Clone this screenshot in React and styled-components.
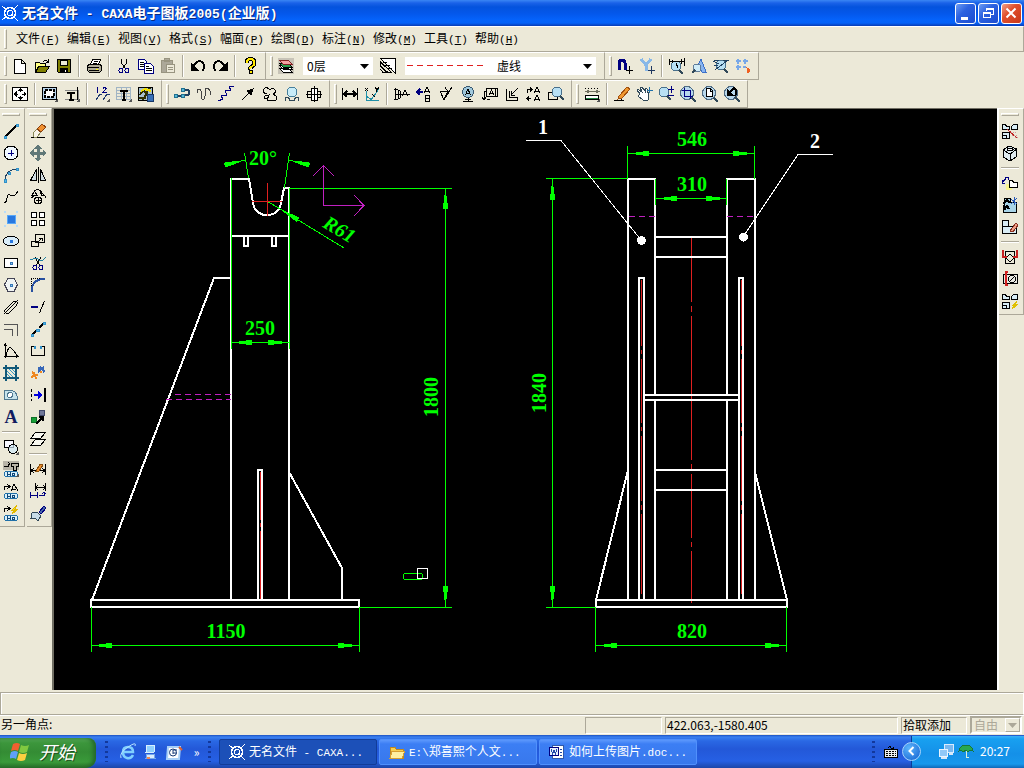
import React from 'react';
import styled, { createGlobalStyle } from 'styled-components';

const face = '#ece9d8';
const shadow = '#aca899';
const navy = '#000080';
const green = '#00ff00';
const magenta = '#c020c0';
const red = '#e02020';
const uiFont = '"Noto Sans CJK SC", sans-serif';
const monoFont = '"Liberation Mono", "Noto Sans CJK SC", monospace';

const GlobalStyle = createGlobalStyle`
  * {
    box-sizing: border-box;
  }
  body {
    margin: 0;
    background: ${face};
    font: 12px/16px ${uiFont};
    color: #000;
  }
  button, select {
    font: inherit;
    color: inherit;
  }
`

const Shell = styled.div`
  display: flex;
  flex-direction: column;
  min-width: 800px;
  height: 100vh;
  min-height: 640px;
`

/* title bar */

const TitleBar = styled.header`
  display: flex;
  align-items: center;
  flex: none;
  height: 26px;
  padding: 0 2px 0 1px;
  background: linear-gradient(#3a86f4 0, #1a62e8 3px, #0453dd 7px, #0458ec 14px, #0563fb 20px, #0562f8 23px, #0a3cb4 26px);
`

const Title = styled.h1`
  flex: 1;
  margin: 0 0 0 3px;
  color: #fff;
  font-size: 14px;
  line-height: 24px;
  font-weight: 700;
  text-shadow: 1px 1px #0a2a80;
  white-space: pre;
`

const Latin = styled.span`
  font-family: ${monoFont};
  font-size: 13px;
`

const WindowButtons = styled.div`
  display: flex;
  gap: 2px;
`

const WindowButton = styled.button`
  display: flex;
  width: 21px;
  height: 21px;
  padding: 0;
  border: 1px solid #fff;
  border-radius: 3px;
  background: ${props => props.$close
    ? 'linear-gradient(135deg, #f0a088, #e0502c 40%, #c8381a)'
    : 'linear-gradient(135deg, #6c9cf4, #2c62e0 40%, #1c4cd0)'};
`

/* menu and toolbars */

const MenuBar = styled.nav`
  display: flex;
  align-items: center;
  flex: none;
  height: 26px;
  padding-left: 4px;
  border-top: 1px solid #fff;
  border-bottom: 1px solid ${shadow};
  border-right: 1px solid ${shadow};
`

const MenuItem = styled.button`
  width: 51px;
  padding: 0;
  border: 0;
  background: none;
  text-align: left;
  white-space: nowrap;

  &:first-of-type {
    margin-left: 7px;
  }
`

const Accel = styled.span`
  font-family: ${monoFont};
  font-size: 11px;

  u {
    text-underline-offset: 1px;
  }
`

const Grip = styled.i`
  flex: none;
  width: ${props => props.$across ? 'auto' : '3px'};
  height: ${props => props.$across ? '3px' : '20px'};
  margin: ${props => props.$across ? '4px 2px' : '0 2px 0 0'};
  border: 1px solid;
  border-color: #fff ${shadow} ${shadow} #fff;
`

const ToolRow = styled.div`
  display: flex;
  flex: none;
  height: 28px;
`

const Band = styled.div`
  display: flex;
  align-items: center;
  padding: 0 4px;
  border: 1px solid;
  border-color: #fff ${shadow} ${shadow} #fff;
  border-left: 0;
`

const ToolButton = styled.button`
  display: flex;
  align-items: center;
  justify-content: center;
  flex: none;
  width: 22px;
  height: 22px;
  padding: 0;
  border: 0;
  background: none;
`

const Divider = styled.i`
  flex: none;
  width: ${props => props.$across ? 'auto' : '2px'};
  height: ${props => props.$across ? '2px' : '22px'};
  margin: ${props => props.$across ? '3px 2px' : '0 3px'};
  border: solid ${shadow};
  border-width: ${props => props.$across ? '1px 0 0' : '0 0 0 1px'};
  box-shadow: ${props => props.$across ? 'inset 0 1px #fff' : 'inset 1px 0 #fff'};
`

const Combo = styled.span`
  display: flex;
  align-items: center;
  width: ${props => props.$wide ? '191px' : '70px'};
  height: 18px;
  margin: 0 4px 0 6px;
  padding: 0 4px 0 2px;
  background: #fff;
`

const ComboSelect = styled.select`
  flex: 1;
  min-width: 0;
  height: 18px;
  padding: 0 2px;
  border: 0;
  background: none;
  appearance: none;
`

const LineSample = styled.svg`
  width: 88px;
  height: 2px;
`

const ComboArrow = styled.svg`
  width: 9px;
  height: 5px;
  pointer-events: none;
`

const IconSvg = styled.svg`
  display: block;
  flex: none;
  width: 18px;
  height: 18px;
  fill: none;
  stroke: #000;
`

/* work area */

const Work = styled.main`
  display: flex;
  flex: 1;
  min-height: 0;
  padding-bottom: 2px;
`

const Dock = styled.aside`
  display: flex;
  align-items: flex-start;
  flex: none;
  gap: 2px;
  border-left: ${props => props.$right ? '2px solid #fff' : '0'};
`

const Palette = styled.div`
  display: flex;
  flex-direction: column;
  width: 25px;
  padding: 0 2px 2px 0;
  border: 1px solid;
  border-color: #fff ${shadow} ${shadow} transparent;
  border-left: 0;

  ${ToolButton} {
    align-self: center;
  }
`

const Canvas = styled.div`
  flex: 1;
  min-width: 0;
  border-top: 1px solid #716f64;
  border-left: 2px solid #716f64;
  background: #000;
`

const Sheet = styled.svg`
  display: block;
  width: 100%;
  height: 100%;
  fill: none;
  font-family: "Liberation Serif", serif;
  font-size: 20px;
  font-weight: 700;
  text-anchor: middle;
`

/* status area */

const Prompt = styled.div`
  flex: none;
  height: 23px;
  border: 1px solid ${shadow};
  border-right-color: #fff;
  box-shadow: inset 1px 1px #fff;
`

const StatusBar = styled.footer`
  display: flex;
  align-items: center;
  flex: none;
  gap: 3px;
  height: 20px;
  padding: 0 2px 1px 1px;
  border-top: 1px solid #fff;
  line-height: 14px;
`

const Message = styled.span`
  flex: 1;
  padding-bottom: 2px;
`

const Pane = styled.span`
  width: ${props => props.$size};
  height: 17px;
  padding-left: 1px;
  border: 1px solid;
  border-color: ${shadow} #fff #fff ${shadow};
`

const SnapSelect = styled.span`
  display: flex;
  align-items: center;
  width: 52px;
  height: 18px;
  border: 2px solid;
  border-color: ${shadow} #fff #fff ${shadow};
  color: ${shadow};
`

const SnapArrow = styled.span`
  display: flex;
  align-items: center;
  justify-content: center;
  flex: none;
  width: 15px;
  height: 14px;
  border: 1px solid;
  border-color: #fff ${shadow} ${shadow} #fff;
`

/* task bar */

const TaskBar = styled.footer`
  display: flex;
  align-items: stretch;
  flex: none;
  height: 33px;
  color: #fff;
  background: linear-gradient(#1c50c0 0, #3a80f0 2px, #2a68e4 6px, #2358d8 14px, #2660e4 26px, #1c46a8 33px);
`

const StartButton = styled.button`
  display: flex;
  align-items: center;
  flex: none;
  gap: 9px;
  width: 96px;
  margin-top: 3px;
  padding: 0 0 4px 10px;
  border: 0;
  border-radius: 0 8px 10px 0;
  color: #fff;
  background: linear-gradient(#5aae5a 0, #3c963c 5px, #348c34 14px, #3a9a3a 24px, #287028 30px);
  box-shadow: inset -3px 0 4px #24682a;
  font-size: 18px;
  line-height: 24px;
  font-style: italic;
  text-shadow: 1px 1px #1e501e;
`

const Quick = styled.div`
  display: flex;
  align-items: center;
  flex: none;
  width: 123px;
  padding-left: 9px;

  ${ToolButton} {
    width: 23px;
  }
`

const Language = styled.div`
  display: flex;
  align-items: center;
  flex: none;
  padding-right: 9px;
`

const Dots = styled.i`
  flex: none;
  align-self: center;
  width: 5px;
  height: 21px;
  margin-right: ${props => props.$gap};
  background: repeating-linear-gradient(#12389c 0 2px, transparent 2px 5px);
  background-clip: content-box;
  border-right: 2px solid transparent;
`

const Tasks = styled.div`
  display: flex;
  flex: 1;
  gap: 2px;
  padding: 4px 0 3px;
`

const Task = styled.button`
  display: flex;
  align-items: center;
  gap: 3px;
  width: 158px;
  padding: 0 8px;
  border: 1px solid ${props => props.$active ? '#123c98' : '#5090fc'};
  border-radius: 2px;
  background: ${props => props.$active ? '#1c50b8' : 'linear-gradient(#5c98fc, #3c7ef4 4px, #3878ec)'};
  color: #fff;
  font-size: 12px;
  white-space: nowrap;

  ${Latin} {
    font-size: 11px;
  }
`

const Tray = styled.div`
  display: flex;
  align-items: center;
  flex: none;
  gap: 2px;
  width: 113px;
  margin-top: 1px;
  padding-bottom: 2px;
  border-left: 1px solid #0c3c98;
  background: linear-gradient(#3cb0f8 0, #18a0f0 3px, #1490e8 18px, #1898ec 28px, #1068b8 32px);

  time {
    margin-left: 3px;
  }
`

const TrayToggle = styled.button`
  display: flex;
  align-items: center;
  justify-content: center;
  width: 19px;
  height: 19px;
  margin-left: -10px;
  margin-right: 14px;
  padding: 0;
  border: 1px solid #a8d4fc;
  border-radius: 50%;
  background: radial-gradient(circle at 35% 30%, #5cb4fc, #1060d0);
`

const Tail = <path d="M13.5 15.5h2v-2zM14.5 15.5v-1" stroke="#555" />;
const Lens = ({ x = 7, y = 7 }) => (
  <g>
    <circle cx={x} cy={y} r="5" fill="#b8e0f4" stroke="#48708c" />
    <path d={`M${x + 3} ${y + 4}l4 4`} stroke="#304858" strokeWidth="2" />
  </g>
);
const Hg = (
  <g>
    <rect x="1.5" y="10.5" width="13" height="5" rx="2" fill="#d8f0fc" stroke="#2070a8" />
    <path d="M4.5 11v4M7.5 11v4M5 13h2M11.5 12h-2v2h2v-2" stroke="#104878" />
  </g>
);
const Blocks = <path d="M.5 6.5v-5h3l1 2h3v3zM9.5 6.5v-3l2-2h4v5zM.5 9.5h7v6h-7zM.5 12.5h4v3" fill="#d8ecf4" />;

const icons = {
  new: <path d="M2.5 1.5h7l4 4v10h-11zM9.5 1.5v4h4" fill="#fff" />,
  open: <><path d="M1.5 14.5v-10h4l1 1h5v3" fill="#ffff80" /><path d="M1.5 14.5l3-6h11l-4 6z" fill="#808000" /><path d="M9 3.500q3-2 5 0M14.500 1v3h-3" /></>,
  save: <><path d="M1.500 1.500h13v13h-12l-1-1z" fill="#808000" /><path d="M4.500 2h7v5h-7z" fill={face} /><path d="M4.500 10.500h7v4h-7z" fill="#000" /><path d="M9.500 12v2" stroke="#fff" /></>,
  print: <><path d="M4.500 6.500l2-5h8l-2 5" fill="#fff" /><path d="M1.500 7.500l2-1h10l2 1v5l-2 2h-10l-2-2z" fill="#b0ac98" /><path d="M2 9.500h11M3 12.500h10M4 14.500h8M7.500 3.500h4M6.500 5.500h4" /><path d="M10 11.500h2" stroke="#ff0" /></>,
  cut: <><path d="M5.500 1v4l4 6M10.500 1v4l-4 6" /><circle cx="5" cy="12.500" r="2" stroke={navy} /><circle cx="11" cy="12.500" r="2" stroke={navy} /></>,
  copy: <><path d="M.500 1.500h6l2 2v8h-8z" fill="#fff" stroke={navy} /><path d="M2 4.500h4M2 6.500h4M2 8.500h4" /><path d="M6.500 5.500h6l3 3v7h-9z" fill="#fff" stroke={navy} /><path d="M8 8.500h3M8 10.500h6M8 12.500h6" /></>,
  paste: <><path d="M1 2h11v12H1zM4 .500h5v3H4z" fill="#aca899" stroke="#989480" /><path d="M6.500 6.500h8v8h-8z" fill={face} stroke="#989480" /><path d="M8 9.500h5M8 11.500h5" stroke="#989480" /></>,
  undo: <><path d="M3 8q6-8 10-3 3 4-1 8" strokeWidth="2" /><path d="M1 5v7h7z" fill="#000" /></>,
  redo: <><path d="M13 8Q7 0 3 5q-3 4 1 8" strokeWidth="2" /><path d="M15 5v7H8z" fill="#000" /></>,
  help: <><path d="M4.500 5q0-4 4-4t4 4q0 2-2.500 3.500T8.500 11" strokeWidth="4" /><path d="M4.500 5q0-4 4-4t4 4q0 2-2.500 3.500T8.500 11M8.500 13v3" stroke="#ffe800" strokeWidth="2" /><path d="M7.500 12.500h3v3h-3z" fill="#ffe800" /></>,
  layers: <><path d="M0 0h16v16H0z" fill="#c8c4b8" stroke="none" /><path d="M1.500 10.500h9l4 4h-9zM1.500 7.500h9l4 4h-9z" fill="#fff" /><path d="M1.500 5.500h9l4 4h-9z" fill="#28a050" /><path d="M1.500 2.500h9l4 4h-9z" fill="#f4a0a0" stroke="#802020" /></>,
  layerSet: <><path d="M.500 .500h15v15z" fill="#fff" /><path d="M.500 4l11 10.500H8L.500 8zM.500 8.500l6 6H3l-2.500-3M3 4h4M5 7h5M8 10h4" /></>,
  magnet: <><path d="M2 12V5q0-3 3-3t3 3v7" stroke={navy} strokeWidth="3" /><path d="M12.500 8v8M9 12.500h7" /></>,
  magnetY: <><path d="M2 1l5 6 5-6M7 7v6" stroke="#88b8e8" strokeWidth="3" /><path d="M12.500 8v8M9 12.500h7" stroke="#203860" /></>,
  lensDim: <><Lens x={7} y={8} /><path d="M.500 1v6M15.500 0v8M1 3.500h14M3 2v3M12 1v5M7 5l2 5" /></>,
  lensA: <><path d="M3 14L10 1l5 13h-4l-2-4" fill="#88b4f0" stroke="#3c70c8" /><circle cx="6" cy="10" r="4" fill="#d0ecf8" stroke="#607c98" /><path d="M1 15l3-3" stroke="#304858" strokeWidth="2" /></>,
  lensNo: <><Lens x={8} y={7} /><path d="M0 3l6 3M2 12l12-9M1 2.500h5M10 2.500h6M1 7.500h4" stroke="#204060" /></>,
  snapGrid: <><path d="M1 3h5M8 3h5M1 9h5M8 9h3M3 1v5M10 1v5M3 7v5" stroke="#78a8e8" strokeWidth="2" /><path d="M12 10l3 2-2 3z" fill="#f06020" stroke="#f06020" /></>,
  fit: <><path d="M.500 1.500h15v13H.500z" fill="#fff" /><path d="M8 4v2M8 10v3M3 8h3M10 8h3" /><path d="M8 2l3 3H5zM8 14l-3-3h6zM1.500 8l3-3v6zM14.500 8l-3-3v6z" fill="#000" stroke="none" /></>,
  frame: <><path d="M.500 1.500h14v12H.500z" fill="#b8d4ec" /><path d="M3 4h9v7H3z" fill="#fff" strokeWidth="2" strokeDasharray="3 1" />{Tail}</>,
  titleT: <><path d="M1 4.500h13v9H1" stroke="#888" /><path d="M3 6.500h8M7 6v7M5 13.500h5" strokeWidth="2" /><path d="M13.500 1v13" />{Tail}</>,
  numbers: <><path d="M2 14l4-6h2M9 14l4-6h3" stroke="#203c70" /><path d="M2.500 2.500l1-1v5M9 2.500q2-2 3 0l-3 4h4" stroke={navy} />{Tail}</>,
  tableT: <><path d="M.500 1.500h14v12H.500zM.500 4.500h14M.500 7.500h14M.500 10.500h14M5.500 1v12M10.500 1v12" stroke="#a0b4c4" /><path d="M4 4.500h8M8 4v9M6 13.500h4" strokeWidth="2" />{Tail}</>,
  parts: <><path d="M.500 1.500h14v13H.500z" fill="#a8c0d0" /><path d="M2 9l3-5 3 3 4-5M1 12h7M5 14l4-7" strokeWidth="2" stroke="#303000" /><path d="M3 5l4-2 6 2" stroke="#f0e000" strokeWidth="2" /><rect x="9" y="8" width="6" height="7" fill="#3870b8" stroke="#183868" /></>,
  loop: <><path d="M3 9.500h8M9 3.500h2q4 0 4 3t-4 3" stroke="#204060" strokeWidth="2" /><path d="M.500 8.500h3v3h-3zM7.500 8.500h3v3h-3zM7.500 2.500h3v3h-3z" fill="#58b8d8" stroke="#207090" /></>,
  wave: <path d="M1 7l1-4h2l1 2v5l1 3h2l1-3V5l1-3h2l2 3v4" stroke="#444" />,
  steps: <path d="M0 15l5-2-2-3 6-1-2-4 6-1-2-3 5-1" stroke={navy} />,
  arrow: <><path d="M2 14l8-8" /><path d="M6 5l8-3-3 8z" fill="#000" stroke="none" /></>,
  cloud: <path d="M5 8q-5-1-3-5 3-3 6 1 2-3 5 0 1 3-2 4 4 2 4 5-2 3-5 1-3 2-5 0l1-3q-1 2-4 1l1-2 4-1-2 5" />,
  hole: <><circle cx="8" cy="6" r="5" fill="#c8ecf8" stroke="#48809c" /><path d="M1.500 15v-4h3l1 3h5l1-3h3v4" stroke="#304858" /></>,
  pin: <><path d="M1.500 5.500h13v6h-13z" /><path d="M5.500 2.500h6v12h-6z" fill="#fff" /><path d="M0 8.500h16M8.500 0v16" /></>,
  dim: <path d="M.500 2v12M15.500 2v12M1 8h14M5 5L2 8l3 3M11 5l3 3-3 3" strokeWidth="1.500" />,
  dimXY: <><path d="M2.500 5v9h12M2 10l6 4M7 14l8-11" stroke="#2090a8" /><path d="M1 2l3 3M4 2L1 5M11 1l2 3 2-3M12.500 4v2M8 8l3 3" /></>,
  datumV: <path d="M1.500 2v12M0 3.500h3q4 1 4 5t-4 5H0M2 8.500h6M8 10l3-6 3 6M9 8.500h7M4.500 4v9" />,
  arrowAB: <><path d="M1 6h6M4 3L1 6l3 3" stroke={navy} strokeWidth="2" /><path d="M8 7l3-6 3 6M9 5.500h4M9.500 9v6h4v-6zM9.500 12h4" /></>,
  rough: <path d="M2 5l4 9 8-13M3 5.500h7L6 13M7 1l3 5" />,
  globeA: <><circle cx="8" cy="6" r="5.500" fill="#a0c8dc" stroke="#385870" /><path d="M5.500 9l2.500-6 2.500 6M6.500 7h3M8 12v3M3 15.500h10M5 13.500h6" /></>,
  frameA: <path d="M4.500 2.500h11v8h-11zM7 9l2.500-5L12 9M8 7.500h3M13.500 2v8M4 5.500H2V14M0 11l2 3 2-3M5 13.500h3" />,
  corner: <path d="M2.500 3v11h11v-3M5.500 5v6h7M7 9l7-7M7 5v4h4" />,
  swapA: <path d="M1 3.500h4M1.500 3v4M4 1.500l2 2-2 2M1 12.500h4M3 10.500l-2 2 2 2M8 7l3-6 3 6M9 5.500h4M8 15l3-6 3 6M9 13.500h4" />,
  lensBox: <><path d="M.500 6.500h9v7h-9z" /><Lens x={9} y={6} /></>,
  ruler: <><path d="M1 2.500h13" strokeDasharray="1 2" /><path d="M2 5.500h13M5 4L2 5.500 5 7M12 4l3 1.500L12 7" stroke="#707060" /><path d="M1.500 9.500h13v4h-13z" fill="#fff" /><path d="M2 12.500h12" stroke="#208040" />{Tail}</>,
  pencil: <><path d="M0 14.500h9l-3-2" /><path d="M5 10l8-9 3 2-8 9-4 1z" fill="#f09830" stroke="#a05010" /></>,
  hand: <><path d="M4 8L1 4l1-1 4 3-2-5 2 0 3 4 0-3 2 1 2 7-1 4H7l-5-4z" fill="#fff" stroke="#304858" /><path d="M13.500 1v6M10.500 4h6" stroke="#2070a8" /></>,
  zoomPm: <><Lens x={6} y={6} /><path d="M10 3.500h6M13.500 0v7M10 9.500h6" stroke={navy} /></>,
  zoomWin: <><circle cx="7" cy="7" r="6.500" fill="#b8d8ec" stroke="#506c84" /><path d="M12 12l4 4" stroke="#304858" strokeWidth="2" /><path d="M4.500 2v8h8M2 4.500h8v8" stroke={navy} /></>,
  zoomPage: <><circle cx="7" cy="7" r="6.500" fill="#b8d8ec" stroke="#506c84" /><path d="M12 12l4 4" stroke="#304858" strokeWidth="2" /><path d="M4.500 2.500h4l2 2v6h-6zM8.500 3v2h2" fill="#fff" /></>,
  zoomBack: <><circle cx="7" cy="7" r="6.500" fill="#b8d8ec" stroke="#506c84" /><path d="M11 11l5 5" stroke="#304858" strokeWidth="2" /><path d="M3 3v6h6z" fill="#000" /><path d="M5 7l5-5q4 2 1 8" strokeWidth="2" /></>,

  line: <><path d="M2 14L14 2" strokeWidth="1.500" /><path d="M1 13h2v2H1zM13 1h2v2h-2z" fill="#58b8e8" stroke="#3090c8" /></>,
  circle: <><circle cx="8" cy="8" r="7" fill="#f0f8ff" /><path d="M8 5v6M5 8h6" stroke={navy} /></>,
  arc: <><path d="M2 14Q2 3 14 2" stroke="#204060" /><path d="M1 12h2v3H1zM5 5h2v2H5zM13 1h2v2h-2z" fill="#58b8e8" stroke="#3090c8" /></>,
  spline: <path d="M1 14q3-1 3-5t3-3 4 1 4-5" />,
  point: <><path d="M4 4h8v8H4z" fill="#2878e0" stroke="#58a8f8" /><path d="M1 1h2M13 1h2M1 15h2M13 15h2" stroke="#b8dcf8" strokeWidth="2" /></>,
  ellipse: <><ellipse cx="8" cy="8" rx="7.500" ry="5" fill="#d8ecf8" /><path d="M7 7h2v2H7z" fill="#2878e0" stroke="#2878e0" /></>,
  rect: <><path d="M1.500 3.500h13v9h-13z" fill="#fff" /><path d="M7 7h2v2H7z" fill="#88c8f0" stroke="#3878b8" /></>,
  polygon: <><path d="M5 1.500h6l3.500 6-3.500 7H5l-3.500-7z" fill="#f0f4f4" stroke="#445" /><path d="M7 7h2v2H7z" fill="#88c8f0" stroke="#3878b8" /></>,
  slot: <path d="M3 10l7-7q3-2 4 0t-1 4l-7 7q-3 1-4-1t1-3zM1 15L15 1" />,
  offset: <path d="M1 3.500h13.500V15M1 8.500h8.500V15" stroke="#555" />,
  axes: <path d="M2.500 1v14M1 13.500h14M1 3l1.500-2L4 3M13 12l2 1.500-2 1.500M3 13Q5 3 8 5t6 8" />,
  hatch: <><path d="M0 3h16M0 13h16M3 0v16M13 0v16" stroke="#105878" strokeWidth="2" /><path d="M4 6l6 6M6 4l6 6M9 4l3 3M4 9l3 3" stroke="#3898c0" /></>,
  region: <><path d="M1.500 3.500h8q5 2 5 9h-13z" fill="#c8e4ec" stroke="#507890" /><circle cx="7" cy="8" r="2.500" fill="#fff" stroke="#507890" /></>,
  text: <text x="8" y="14" fill="#101c60" stroke="none" fontFamily="Liberation Serif, serif" fontSize="18" fontWeight="700" textAnchor="middle">A</text>,
  blockPick: <><path d="M1.500 1.500h9v7h-9z" fill="#f8f8ff" /><circle cx="10" cy="10" r="4.500" fill="#d0e8f8" fillOpacity=".7" />{Tail}</>,
  hgBolt: <>{Hg}<path d="M0 0h16v9H0z" fill="#b8b4a8" stroke="none" /><path d="M1 5h4V3h2M5 1l2 2-2 2M8.500 2.500h7v3h-2v4h-3v-4h-2z" />{Tail}</>,
  hgText: <>{Hg}<path d="M1.500 7V3.500H6M4 1l3 2.500L4 6M8 8l3-7 4 7M9 6h4" /></>,
  hgFlash: <>{Hg}<path d="M1.500 7V3.500H6M4 1l3 2.500L4 6" /><path d="M14 0L9 5h3l-3 4 6-5h-3z" fill="#f8e020" stroke="#e0b800" /></>,

  erase: <><path d="M1 14.500h14" /><path d="M3 10l4-4 4 3-4 5H4z" fill="#f8f4e8" stroke="#885" /><path d="M7 6l5-5 4 3-5 5z" fill="#f09030" stroke="#884010" /></>,
  move: <path d="M8 0l3 3H9v4h4V5l3 3-3 3V9H9v4h2l-3 3-3-3h2V9H3v2L0 8l3-3v2h4V3H5z" fill="#607878" stroke="#607878" />,
  mirror: <path d="M8.500 0v16M6.500 2v11.500H.500zM10.500 2v11.500h5z" fill="#d0dce0" />,
  rotate: <><path d="M1.500 6.500h6l-3-4zM10.500 2.500l4 4h-3zM4 2l4-2 4 3M1 9l3-2M15 9V7" /><circle cx="8" cy="11.500" r="3.500" /><path d="M8 9v5M5.500 11.500h5" /></>,
  array: <path d="M1.500 1.500h5v5h-5zM9.500 1.500h5v5h-5zM1.500 9.500h5v5h-5zM9.500 9.500h5v5h-5z" fill="#fff" />,
  scale: <path d="M5.500 1.500h9v8h-9zM1.500 8.500h7v5h-7zM8 9l4-4M9 5h3v3" />,
  trim: <><path d="M5 2l5 9M11 2l-5 9" /><circle cx="5" cy="12.500" r="2" stroke={navy} /><circle cx="11" cy="12.500" r="2" stroke={navy} /><path d="M0 5q7-3 9 0t7-3" stroke="#2080a0" /></>,
  fillet: <><path d="M1.500 2v13M1 1.500h14" strokeDasharray="1 1" /><path d="M2 15Q1 2 15 2" stroke="#2850a0" strokeWidth="2" /></>,
  extend: <><path d="M1 8h7" stroke={navy} strokeWidth="2" /><path d="M14.500 2l-5 12" /></>,
  breakLine: <><path d="M2 14l4-4M9 7l5-5" strokeWidth="1.500" /><path d="M1 13h2v2H1zM6 8h3v2H6zM13 1h2v2h-2z" fill="#58b8e8" stroke="#3090c8" /></>,
  gap: <><path d="M5 3.500H1.500v9h13v-9H11" /><path d="M5 3v3M11 3v3" stroke="#3090c8" strokeWidth="2" /></>,
  explode: <><path d="M1 13l4-4M2 7l3 2M6 14l-1-4M4 11l4-1M9 5l3 3" stroke="#f08820" strokeWidth="2" /><path d="M8 7l6-5M10 2l4 4M13 7l2-1M8 3l3 2" stroke="#3868b8" strokeWidth="2" /></>,
  stretch: <><path d="M1.500 2v12" strokeDasharray="3 2" /><path d="M4 8h7" stroke="#0000e0" strokeWidth="2" /><path d="M8 4l5 4-5 4z" fill="#0000e0" stroke="none" /><path d="M15 1v14" strokeWidth="2" /></>,
  format: <><path d="M1 8h5v5H1z" fill="#18a038" stroke="#107028" /><path d="M9 1h5v5H9z" fill="#707898" stroke="#404868" /><path d="M6 15l6-6M9 8h4v4" strokeWidth="2" /></>,
  sheets: <path d="M5.500 1.500h10l-5 6h-10zM5.500 8.500h10l-5 6h-10z" fill="#f8f8f0" />,
  dimEdit: <><path d="M.500 3v11M15.500 3v11M1 9.500h14M4 7L1 9.500 4 12M12 7l3 2.500-3 2.500" /><path d="M6 10l4-7 3 1-4 6z" fill="#f09030" stroke="#885010" /></>,
  dimMove: <><path d="M5.500 0v8M15.500 0v8M6 4.500h9M8 2L6 4.500 8 7M13 2l2 2.500L13 7" /><path d="M.500 9v6M7.500 9v6M1 12.500h6M9 12.500h5V9M12 11l2-2 2 2" stroke={navy} /></>,
  brush: <><path d="M9 7l5-6 2 2-5 6z" fill="#4868a8" stroke={navy} /><path d="M2 8l5-1 4 4-3 5q-2-3-7-3z" fill="#c8dce8" stroke="#304858" /></>,

  blocksCut: <>{Blocks}<path d="M5 6l10 9" stroke="#c02020" /><path d="M9 9h6M10 12h6M13 14h3" stroke="#d09898" strokeDasharray="1 1" /></>,
  nut: <><path d="M1 5l6-4 8 3-1 8-6 4-7-4z" fill="#e0ecf0" /><path d="M1 5l7 4 7-5M8 9v7" /><ellipse cx="8" cy="4.500" rx="3" ry="1.500" fill="#fff" /></>,
  place: <><path d="M4 9h6v6H4z" fill="#f8f490" stroke="none" /><path d="M0 8l5-6M.500 8V5M0 8h3M3 2h3v3" stroke={navy} /><path d="M7.500 5.500h3l1 2h4v5h-8z" fill="#fff" /></>,
  partsEdit: <><path d="M2.500 1.500h6v4h6v10h-13v-7h1z" fill="#a8d4e8" /><path d="M1 7l4-4 3 3M2 13l3-4 2 3M1 10h4" strokeWidth="2" /><path d="M9 2l6 5M15 1L9 7M12 0v8" stroke="#2858b8" /></>,
  partsErase: <><path d="M.500 1.500h6v6h8v7h-14zM.500 7.500h6" fill="#d8ecf4" /><path d="M8 12l6-8 2 2-5 7z" fill="#f0a088" stroke="#883020" /></>,
  boxTol: <><path d="M3.500 2.500h9v12h-9z" /><path d="M8 5l4 4-4 4-4-4z" /><path d="M1 1v7h4M15 1v7h-4" stroke="#c82020" strokeWidth="2" /></>,
  boxTurn: <><path d="M1.500 3.500h14v9h-14z" fill="#e8e8e0" /><circle cx="10" cy="8" r="3.500" /><path d="M7 11l6-6" /><path d="M6 1H4v13h2" stroke="#d02020" strokeWidth="2" /></>,
  blocksFlash: <>{Blocks}<path d="M15 8l-4 4h2l-3 4 6-5h-3z" fill="#f8e020" stroke="#e0c000" /></>,

  caxa: <g stroke="#fff"><circle cx="8" cy="8" r="5.500" strokeWidth="1.500" /><circle cx="8" cy="8" r="2.500" /><path d="M0 1l5 4M16 0l-5 5M0 15l5-4M16 16l-5-5M10.500 6v5" /></g>,
  folder: <><path d="M1 3h5l1 2h7v9H1z" fill="#f8d050" stroke="#c08820" /><path d="M3 7h13l-3 7H1z" fill="#fff0a0" stroke="#d8a030" /></>,
  word: <><path d="M3.500 1.500h11v13h-11z" fill="#fff" stroke="#3058a8" /><path d="M.500 3.500h9v8h-9z" fill="#e8f0ff" stroke={navy} /><path d="M2 5l1.500 5L5 6l1.500 4L8 5M11 5h2M11 8h2M11 11h2" stroke="#2048a8" /></>,
  ie: <g shapeRendering="auto"><path d="M13 11q-2 4-6 3-4-1-4-6t5-5q5 0 5 5H4" stroke="#80d0ff" strokeWidth="2.500" /><path d="M1 14Q-1 9 8 3t7-1" stroke="#b8e4ff" /></g>,
  desktop: <><path d="M4 1h8l-1 7H3z" fill="#90d0ff" stroke="#d8f0ff" /><path d="M4 10h7l1 4H3z" fill="#d8ecff" stroke="#78a8e8" /><path d="M4 14h3" stroke="#f08850" strokeWidth="2" /></>,
  outlook: <g shapeRendering="auto"><path d="M2 3h12l-1 12H1z" fill="#fff" stroke="#a8d0f8" strokeWidth="2" /><circle cx="7" cy="8.500" r="3.500" stroke="#183c78" /><path d="M7 6h4M7 9h4M7 6v4" stroke="#183c78" /><path d="M13 3l3 3" stroke="#e06030" strokeWidth="2" /></g>,
  keyboard: <><path d="M5 4q2-3 3 0t3-1" /><path d="M1.500 5.500h13v8h-13z" fill="#eee" /><path d="M3 7.500h10M3 9.500h10M3 11.500h10" strokeDasharray="2 1" /></>,
  network: <><path d="M6 1h9v8H6z" fill="#78b8f0" stroke="#d8ecff" /><path d="M1 6h8v7H1z" fill="#90c8f8" stroke="#e8f4ff" /><path d="M3 15h6M11 11h4" stroke="#d8e8f8" strokeWidth="2" /></>,
  umbrella: <><path d="M1 8q1-6 7-6t7 6l-3-1-2 2-2-2-3 2-2-2z" fill="#28a850" stroke="#187838" /><path d="M8 8v6q1 2 3 0" stroke="#d8f0d8" /></>,
  minimize: <path d="M4 13h7" stroke="#fff" strokeWidth="3" />,
  restore: <path d="M6.500 6V3.500h7v6H11M6 4.500h8M3.500 7.500h7v5h-7zM3 8.500h8" stroke="#fff" />,
  close: <path d="M3.500 3.500l9 9M12.500 3.500l-9 9" stroke="#fff" strokeWidth="2" shapeRendering="auto" />,
  back: <path d="M9.500 4l-4 4 4 4" stroke="#fff" strokeWidth="2" shapeRendering="auto" />,
};

const Icon = ({ name }) => (
  <IconSvg viewBox="-1 -1 18 18" shapeRendering="crispEdges" aria-hidden="true">{icons[name]}</IconSvg>
);

const Tools = ({ names, across }) => names.split(' ').map((name, i) => (
  name === '|'
    ? <Divider key={i} $across={across} />
    : <ToolButton key={i} type="button" aria-label={name}><Icon name={name} /></ToolButton>
));

const Arrow = ({ fill = '#000' }) => (
  <ComboArrow viewBox="0 0 9 5"><path d="M0 0h9L4.500 5z" fill={fill} /></ComboArrow>
);

// filled dimension arrow, the tip at x, y and the tail turned by angle
const Head = ({ x, y, angle = 0 }) => (
  <path d="M0 0L15-2 21-2.500V2.500L15 2z" fill={green} transform={`translate(${x} ${y}) rotate(${angle})`} />
);

const menus = [
  ['文件', 'F'], ['编辑', 'E'], ['视图', 'V'], ['格式', 'S'], ['幅面', 'P'],
  ['绘图', 'D'], ['标注', 'N'], ['修改', 'M'], ['工具', 'T'], ['帮助', 'H'],
];

const FrontView = () => (
  <g>
    <g stroke="#fff" strokeWidth="2">
      <path d="M231 349V179h18l4 24q2 12 14 12t14-12l3-15h5v161M231 349v251M289 349v251" />
      <path d="M231 236h58M244 236v10h4v-10M272 236v10h4v-10" />
      <path d="M231 278h-17L92 600M289 472l53 96v32M258 600V470h4v130M91 600h268v7H91z" />
    </g>
    <g stroke={green}>
      <path d="M231.500 178v171M289.500 188v161M231 342.500h58" />
      <path d="M289 188.500h163M445.500 188v419M359 607.500h93" />
      <path d="M91.500 607v45M359.500 607v45M91 645.500h268" />
      <path d="M244.500 153l4 25M289.500 153l-5 35M225 165l20-5M309 165l-20-5M267 201l77 47" />
    </g>
    <path d="M252 201.500h30M267.500 183v33M260.500 472v48m0 3v4m0 4v68" stroke={red} />
    <path d="M166 399.500h65M175 394.500h56" stroke={magenta} strokeDasharray="6 4" />
    <path d="M323.500 166v39.500H364M313 176l10.500-10.500L334 176M354 195l10 10.500L354 216" stroke={magenta} />
    <Head x={231} y={342.500} />
    <Head x={289} y={342.500} angle={180} />
    <Head x={91} y={645.500} />
    <Head x={359} y={645.500} angle={180} />
    <Head x={445.500} y={188} angle={90} />
    <Head x={445.500} y={607} angle={-90} />
    <Head x={245} y={160} angle={166} />
    <Head x={289} y={160} angle={14} />
    <Head x={280} y={209} angle={31} />
    <g fill={green}>
      <text x="263" y="165">20°</text>
      <text x="260" y="335">250</text>
      <text x="226" y="638">1150</text>
      <text transform="translate(336 235) rotate(31)" fontStyle="italic">R61</text>
      <text transform="translate(438 397) rotate(-90)">1800</text>
    </g>
    <rect x="403.500" y="573.500" width="19" height="6" rx="2" stroke={green} />
    <rect x="417.500" y="568.500" width="10" height="10" stroke="#fff" />
  </g>
);

const SideView = () => (
  <g>
    <path d="M691.500 238v64m0 4v6m0 4v144m0 4v6m0 4v64m0 4v5m0 4v52" stroke={red} />
    <g stroke="#fff" strokeWidth="2">
      <path d="M628 600V179h27v216M655 400v200M755 600V179h-28v216M727 400v200" />
      <path d="M655 237h72M655 257h72M655 470h72M655 490h72M644 395h95M644 400h95" />
      <path d="M639 600V278h5v322M739 600V278h4v322" />
      <path d="M628 470l-32 130M755 472l32 128M596 600h191v7H596z" />
    </g>
    <path d="M641.500 280v66m0 4v4m0 5v64m0 4v4m0 5v65m0 4v5m0 4v80M741.500 280v66m0 4v4m0 5v64m0 4v4m0 5v65m0 4v5m0 4v80" stroke={red} />
    <g stroke={green}>
      <path d="M627.500 146v33M754.500 146v33M628 153.500h127" />
      <path d="M655.500 179v26M726.500 179v26M655 198.500h72" />
      <path d="M546 178.500h82M552.500 178v429M546 607.500h50" />
      <path d="M595.500 607v45M786.500 607v45M596 645.500h191" />
    </g>
    <path d="M629 216.500h26M727 216.500h28" stroke={magenta} strokeDasharray="6 4" />
    <Head x={628} y={153.500} />
    <Head x={754} y={153.500} angle={180} />
    <Head x={656} y={198.500} />
    <Head x={727} y={198.500} angle={180} />
    <Head x={596} y={645.500} />
    <Head x={786} y={645.500} angle={180} />
    <Head x={552.500} y={179} angle={90} />
    <Head x={552.500} y={607} angle={-90} />
    <g fill={green}>
      <text x="692" y="146">546</text>
      <text x="692" y="191">310</text>
      <text x="692" y="638">820</text>
      <text transform="translate(546 393) rotate(-90)">1840</text>
    </g>
    <path d="M526 140.500h35L641 240M833 154.500h-35L743 237" stroke="#fff" />
    <g fill="#fff">
      <circle cx="641.500" cy="240.500" r="4.500" />
      <circle cx="743.500" cy="237" r="4.500" />
      <text x="543" y="134">1</text>
      <text x="815" y="148">2</text>
    </g>
  </g>
);

const WindowsFlag = () => (
  <svg width="20" height="19" viewBox="0 0 20 19" aria-hidden="true">
    <path d="M3 2q4-2 7 0L8 9Q5 7 1 9z" fill="#f06030" />
    <path d="M11 3q4 2 8 0l-2 7q-4 2-8 0z" fill="#80c840" />
    <path d="M1 10q4-2 7 0l-2 7q-3-2-7 0z" fill="#60a0f8" />
    <path d="M9 11q4 2 8 0l-2 7q-4 2-8 0z" fill="#fcd040" />
  </svg>
);

const App = () => (
  <Shell>
    <GlobalStyle />
    <TitleBar>
      <Icon name="caxa" />
      <Title>无名文件<Latin> - CAXA</Latin>电子图板<Latin>2005(</Latin>企业版<Latin>)</Latin></Title>
      <WindowButtons>
        <WindowButton type="button" aria-label="最小化"><Icon name="minimize" /></WindowButton>
        <WindowButton type="button" aria-label="还原"><Icon name="restore" /></WindowButton>
        <WindowButton type="button" aria-label="关闭" $close><Icon name="close" /></WindowButton>
      </WindowButtons>
    </TitleBar>

    <MenuBar>
      <Grip />
      {menus.map(([label, key]) => (
        <MenuItem key={key} type="button">{label}<Accel>(<u>{key}</u>)</Accel></MenuItem>
      ))}
    </MenuBar>

    <ToolRow>
      <Band>
        <Grip />
        <Tools names="new open save | print | cut copy paste | undo redo | help" />
      </Band>
      <Band>
        <Grip />
        <Tools names="layers" />
        <Combo>
          <ComboSelect aria-label="图层"><option>0层</option></ComboSelect>
          <Arrow />
        </Combo>
        <Tools names="layerSet" />
        <Combo $wide>
          <LineSample viewBox="0 0 88 2"><path d="M0 .500h78" stroke="#e02020" strokeDasharray="6 4" shapeRendering="crispEdges" /></LineSample>
          <ComboSelect aria-label="线型"><option>虚线</option></ComboSelect>
          <Arrow />
        </Combo>
      </Band>
      <Band>
        <Grip />
        <Tools names="magnet magnetY | lensDim lensA lensNo snapGrid" />
      </Band>
    </ToolRow>
    <ToolRow>
      <Band>
        <Grip />
        <Tools names="fit | frame titleT | numbers tableT parts" />
      </Band>
      <Band>
        <Grip />
        <Tools names="loop wave steps arrow cloud hole pin" />
      </Band>
      <Band>
        <Grip />
        <Tools names="dim dimXY | datumV arrowAB rough globeA frameA corner swapA lensBox" />
      </Band>
      <Band>
        <Grip />
        <Tools names="ruler | pencil hand zoomPm zoomWin zoomPage zoomBack" />
      </Band>
    </ToolRow>

    <Work>
      <Dock>
        <Palette>
          <Grip $across />
          <Tools across names="line circle arc spline point ellipse rect polygon slot offset axes hatch region text | blockPick hgBolt hgText hgFlash" />
        </Palette>
        <Palette>
          <Grip $across />
          <Tools across names="erase move mirror rotate array scale trim fillet extend breakLine gap explode stretch format sheets | dimEdit dimMove brush" />
        </Palette>
      </Dock>
      <Canvas>
        <Sheet viewBox="54 109 943 581" shapeRendering="crispEdges">
          <FrontView />
          <SideView />
        </Sheet>
      </Canvas>
      <Dock $right>
        <Palette>
          <Grip $across />
          <Tools across names="blocksCut nut | place partsEdit partsErase | boxTol boxTurn blocksFlash" />
        </Palette>
      </Dock>
    </Work>

    <Prompt />
    <StatusBar>
      <Message>另一角点:</Message>
      <Pane $size="77px" />
      <Pane $size="233px">422.063,-1580.405</Pane>
      <Pane $size="66px">拾取添加</Pane>
      <SnapSelect>
        <ComboSelect aria-label="捕捉方式"><option>自由</option></ComboSelect>
        <SnapArrow><Arrow fill={shadow} /></SnapArrow>
      </SnapSelect>
    </StatusBar>

    <TaskBar>
      <StartButton type="button"><WindowsFlag />开始</StartButton>
      <Quick>
        <Dots $gap="6px" />
        <Tools names="ie desktop outlook" />
        <ToolButton type="button" aria-label="更多">»</ToolButton>
        <Dots $gap="0" />
      </Quick>
      <Tasks>
        <Task type="button" $active><Icon name="caxa" /><span>无名文件<Latin> - CAXA...</Latin></span></Task>
        <Task type="button"><Icon name="folder" /><span><Latin>E:\</Latin>郑喜熙个人文<Latin>...</Latin></span></Task>
        <Task type="button"><Icon name="word" /><span>如何上传图片<Latin>.doc...</Latin></span></Task>
      </Tasks>
      <Language>
        <Dots $gap="3px" />
        <ToolButton type="button" aria-label="输入法"><Icon name="keyboard" /></ToolButton>
      </Language>
      <Tray>
        <TrayToggle type="button" aria-label="显示图标"><Icon name="back" /></TrayToggle>
        <Icon name="network" />
        <Icon name="umbrella" />
        <time>20:27</time>
      </Tray>
    </TaskBar>
  </Shell>
);

export default App;
